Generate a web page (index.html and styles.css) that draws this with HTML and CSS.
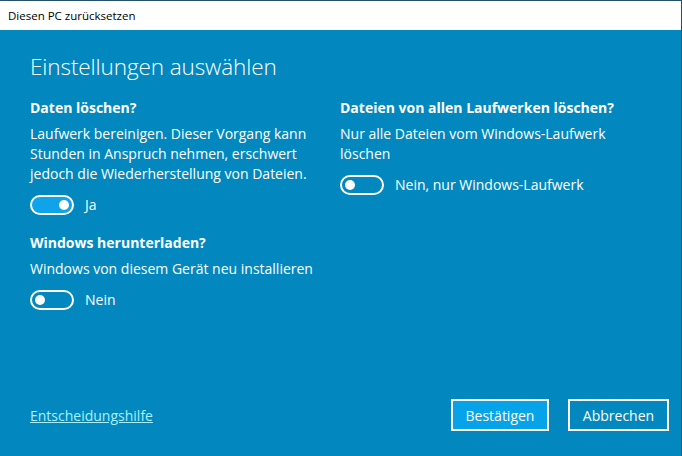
FILE: index.html
```html
<!DOCTYPE html>
<html lang="de">
<head>
<meta charset="utf-8">
<title>Diesen PC zurücksetzen</title>
<link rel="stylesheet" href="styles.css">
</head>
<body>
<div class="window">
  <div class="titlebar">Diesen PC zurücksetzen</div>
  <div class="content">
    <h1 class="heading">Einstellungen auswählen</h1>
    <div class="columns">
      <div class="column">
        <section class="option">
          <h2 class="option-title">Daten löschen?</h2>
          <p class="option-text">Laufwerk bereinigen. Dieser Vorgang kann<br>Stunden in Anspruch nehmen, erschwert<br>jedoch die Wiederherstellung von Dateien.</p>
          <div class="toggle-row">
            <span class="toggle toggle-on"><span class="knob"></span></span>
            <span class="toggle-label">Ja</span>
          </div>
        </section>
        <section class="option option-second">
          <h2 class="option-title">Windows herunterladen?</h2>
          <p class="option-text">Windows von diesem Gerät neu installieren</p>
          <div class="toggle-row">
            <span class="toggle"><span class="knob"></span></span>
            <span class="toggle-label">Nein</span>
          </div>
        </section>
      </div>
      <div class="column">
        <section class="option">
          <h2 class="option-title">Dateien von allen Laufwerken löschen?</h2>
          <p class="option-text">Nur alle Dateien vom Windows-Laufwerk<br>löschen</p>
          <div class="toggle-row">
            <span class="toggle"><span class="knob"></span></span>
            <span class="toggle-label">Nein, nur Windows-Laufwerk</span>
          </div>
        </section>
      </div>
    </div>
    <div class="footer">
      <a class="help-link" href="#">Entscheidungshilfe</a>
      <div class="buttons">
        <button class="btn btn-primary" type="button">Bestätigen</button>
        <button class="btn" type="button">Abbrechen</button>
      </div>
    </div>
  </div>
</div>
</body>
</html>
```
FILE: styles.css
```css
* { box-sizing: border-box; }
html, body { margin: 0; padding: 0; }
body {
  font-family: "Open Sans", "Noto Sans", "DejaVu Sans", sans-serif;
  background: #0288be;
}
.window {
  width: 682px;
  height: 456px;
  display: flex;
  flex-direction: column;
  border-top: 1px solid #24506f;
  border-right: 1px solid #24506f;
  background: #0288be;
}
.titlebar {
  height: 29px;
  background: #ffffff;
  color: #000;
  font-size: 11.5px;
  padding-left: 8px;
  display: flex;
  align-items: center;
}
.content {
  flex: 1;
  display: flex;
  flex-direction: column;
  padding: 0 12px 0 30px;
  color: #ffffff;
}
.heading {
  margin: 21px 0 0 0;
  font-size: 22.5px;
  font-weight: 300;
  line-height: 32px;
  letter-spacing: -0.1px;
}
.columns {
  display: grid;
  grid-template-columns: 310px 1fr;
  margin-top: 15px;
}
.option-title {
  margin: 0;
  font-size: 14px;
  font-weight: 700;
  line-height: 20px;
}
.option-text {
  margin: 6px 0 0 0;
  font-size: 14px;
  line-height: 20px;
}
.option-second { margin-top: 18px; }
.toggle-row {
  display: flex;
  align-items: center;
  gap: 11px;
  margin-top: 11px;
}
.toggle {
  width: 44px;
  height: 20px;
  border: 2px solid #ffffff;
  border-radius: 10px;
  display: flex;
  align-items: center;
  padding: 0 3px;
}
.toggle-on {
  background: #0fa3ea;
  justify-content: flex-end;
}
.knob {
  width: 10px;
  height: 10px;
  border-radius: 50%;
  background: #ffffff;
}
.toggle-label {
  font-size: 14px;
  line-height: 20px;
}
.footer {
  margin-top: auto;
  margin-bottom: 25px;
  display: flex;
  align-items: center;
  justify-content: space-between;
}
.help-link {
  color: #a8f0ff;
  font-size: 14px;
  text-decoration: underline;
}
.buttons {
  display: flex;
  gap: 19px;
}
.btn {
  font-family: inherit;
  font-size: 14px;
  color: #ffffff;
  background: transparent;
  border: 2px solid #ffffff;
  height: 32px;
  width: 101px;
  padding: 0;
}
.btn-primary {
  background: #07a3e8;
  width: 98px;
}
```
